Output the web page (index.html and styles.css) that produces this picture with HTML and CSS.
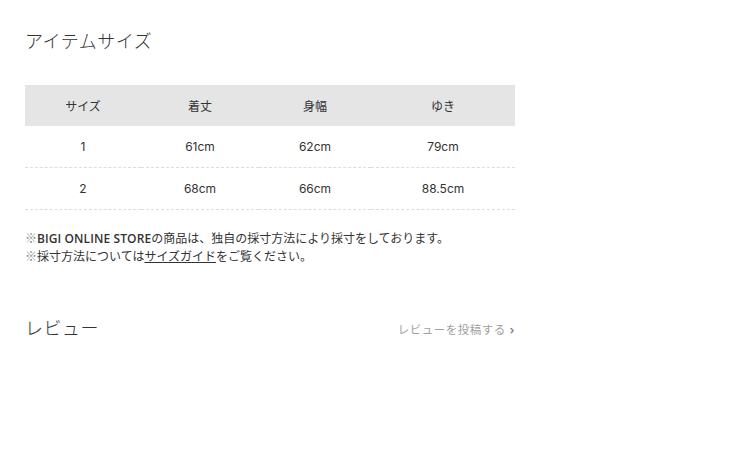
FILE: index.html
```html
<!DOCTYPE html>
<html lang="ja">
<head>
    <meta charset="UTF-8">
    <meta name="viewport" content="width=device-width, initial-scale=1.0">
    <title>アイテムサイズ</title>
    <link rel="stylesheet" href="styles.css">
</head>
<body>
    <!-- サイズ表 -->
    <section class="size-section">
        <h2 class="section-title">アイテムサイズ</h2>
        <table class="size-table">
            <thead>
                <tr>
                    <th class="col-size">サイズ</th>
                    <th class="col-length">着丈</th>
                    <th class="col-width">身幅</th>
                    <th class="col-sleeve">ゆき</th>
                </tr>
            </thead>
            <tbody>
                <tr>
                    <td>1</td>
                    <td>61cm</td>
                    <td>62cm</td>
                    <td>79cm</td>
                </tr>
                <tr>
                    <td>2</td>
                    <td>68cm</td>
                    <td>66cm</td>
                    <td>88.5cm</td>
                </tr>
            </tbody>
        </table>
        <p class="size-note"><span class="mark">※</span><span class="latin">BIGI ONLINE STORE</span>の商品は、独自の採寸方法により採寸をしております。<br><span class="mark">※</span>採寸方法については<a href="#" class="guide-link">サイズガイド</a>をご覧ください。</p>
    </section>

    <!-- レビュー -->
    <section class="review-section">
        <h2 class="section-title">レビュー</h2>
        <a href="#" class="review-link">レビューを投稿する <span class="arrow">›</span></a>
    </section>
</body>
</html>
```

FILE: styles.css
```css
body {
    margin: 0;
    padding: 29px 25px 0;
    width: 490px;
    font-family: 'Inter', 'Noto Sans CJK JP', sans-serif;
    color: #333;
    background-color: #fff;
}
.section-title {
    margin: 0;
    font-size: 18px;
    font-weight: 300;
    line-height: 26px;
    color: #333;
    letter-spacing: 0.5px;
}
.size-table {
    width: 490px;
    margin-top: 30px;
    border-collapse: collapse;
    table-layout: fixed;
    font-size: 12px;
}
.size-table th {
    height: 41px;
    padding: 0;
    background-color: #e5e5e5;
    font-weight: 400;
    color: #333;
}
.col-size { width: 116px; }
.col-length { width: 118px; }
.col-width { width: 112px; }
.col-sleeve { width: 144px; }
.size-table td {
    height: 41px;
    padding: 0;
    text-align: center;
    border-bottom: 1px dashed #ddd;
    color: #333;
}
.size-note {
    margin: 19px 0 0;
    font-size: 12px;
    line-height: 17px;
    color: #333;
}
.size-note .mark {
    font-family: 'Noto Sans CJK JP', sans-serif;
    color: #888;
}
.size-note .latin {
    font-family: 'Open Sans', sans-serif;
    font-weight: 600;
    letter-spacing: 0.1px;
}
.guide-link {
    color: #333;
    text-decoration: underline;
}
.review-section {
    display: flex;
    justify-content: space-between;
    align-items: center;
    margin-top: 51px;
}
.review-link {
    font-size: 11.5px;
    letter-spacing: 0.5px;
    color: #a0a0a0;
    text-decoration: none;
}
.review-link .arrow {
    font-weight: 700;
    color: #888;
}
```
